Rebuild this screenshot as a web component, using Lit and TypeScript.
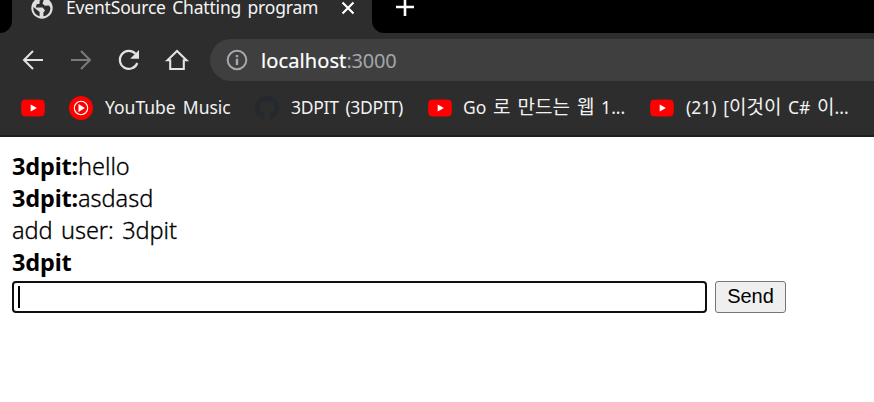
import { LitElement, html, svg, css } from "lit";
import { customElement, property } from "lit/decorators.js";

const glyphs: Record<string, { box: string; body: unknown }> = {
  back: { box: "0 0 24 24", body: svg`<path d="M22 12H3.5M12 3L3 12l9 9" fill="none" stroke="#e3e3e3" stroke-width="2"/>` },
  forward: { box: "0 0 24 24", body: svg`<path d="M2 12h18.500M12 3l9 9-9 9" fill="none" stroke="#7b7b7b" stroke-width="2"/>` },
  reload: { box: "0 0 24 24", body: svg`<path d="M20.300 15A9 9 0 1 1 18.500 5.800" fill="none" stroke="#e3e3e3" stroke-width="2.200"/><path d="M22 2v8.800h-8.800z" fill="#e3e3e3"/>` },
  home: { box: "0 0 24 24", body: svg`<path d="M2.500 12.200L12 3l9.500 9.200H18.800V21H5.200v-8.800z" fill="none" stroke="#e3e3e3" stroke-width="2.100"/>` },
  globe: { box: "0 0 22 22", body: svg`<circle cx="11" cy="11" r="10.700" fill="#dedede"/><path d="M11.500 2.200L8.600 3.600v3.200L5.600 7.300l-.8 3.200h6.800l2.500 3.100-1.700 2v3.700c4-.5 7-4 7-8.300l-1.300-2.500-4.300.3-2.300-2.300 1.200-3.200z" fill="#2d2d2d"/><path d="M2.400 10l6.200 5v4.300C4.400 18.200 2 14.400 2.400 10z" fill="#2d2d2d"/>` },
  info: { box: "0 0 22 22", body: svg`<circle cx="11" cy="11" r="9.300" fill="none" stroke="#a5a8ac" stroke-width="2"/><path d="M9.800 9.800h2.400V16H9.800zM9.800 6h2.400v2.300H9.800z" fill="#a5a8ac"/>` },
  close: { box: "0 0 14 14", body: svg`<path d="M1.500 1.500l11 11m0-11l-11 11" stroke="#fff" stroke-width="2.200"/>` },
  plus: { box: "0 0 18 18", body: svg`<path d="M9 0v18M0 9h18" stroke="#fff" stroke-width="2.600"/>` },
  youtube: { box: "0 0 24 24", body: svg`<path d="M3.200 3.800Q12 3.200 20.800 3.800Q23.200 4 23.600 6.500Q24.200 12 23.600 17.500Q23.200 20 20.800 20.200Q12 20.800 3.200 20.200Q.8 20 .4 17.500Q-.2 12 .4 6.500Q.8 4 3.200 3.800z" fill="#f00"/><path d="M9.700 8.400v7.200l6.200-3.600z" fill="#fff"/>` },
  music: { box: "0 0 24 24", body: svg`<circle cx="12" cy="12" r="12" fill="#f00"/><circle cx="12" cy="12" r="6.700" fill="none" stroke="#fff" stroke-width="1.100"/><path d="M9.500 8.100v7.800l6.400-3.900z" fill="#fff"/>` },
  github: { box: "0 0 16 16", body: svg`<path fill="#24292e" d="M8 0C3.580 0 0 3.580 0 8c0 3.540 2.290 6.530 5.470 7.590.4.070.550-.170.550-.380 0-.190-.010-.820-.010-1.490-2.010.370-2.530-.490-2.690-.940-.090-.230-.480-.940-.820-1.130-.280-.150-.680-.520-.010-.530.630-.010 1.080.580 1.230.820.720 1.210 1.870.870 2.330.660.070-.520.280-.870.510-1.070-1.780-.2-3.640-.890-3.640-3.950 0-.870.310-1.590.820-2.150-.080-.2-.360-1.020.080-2.120 0 0 .670-.210 2.200.820.640-.180 1.320-.270 2-.270s1.360.090 2 .270c1.530-1.040 2.200-.820 2.200-.820.440 1.100.160 1.920.080 2.120.510.560.820 1.270.820 2.150 0 3.070-1.870 3.750-3.650 3.950.290.250.540.730.540 1.480 0 1.070-.010 1.930-.010 2.200 0 .210.150.460.550.380A8.010 8.010 0 0 0 16 8c0-4.420-3.580-8-8-8z"/>` },
};

@customElement("ui-icon")
class UiIcon extends LitElement {
  @property() name = "";
  @property({ type: Number }) size = 24;
  static styles = css`
    :host { display: block; flex: none; line-height: 0; }
    svg { display: block; overflow: visible; }
  `;
  render() {
    const g = glyphs[this.name];
    return html`<svg width=${this.size} height=${this.size} viewBox=${g.box}>${g.body}</svg>`;
  }
}

@customElement("app-root")
class AppRoot extends LitElement {
  static styles = css`
    :host { display: block; width: 874px; height: 402px; overflow: hidden; background: #fff;
      font-family: "Noto Sans", "Noto Sans CJK KR", sans-serif; }
    .strip { display: flex; height: 33px; background: #2d2d2d; }
    .edge { width: 12px; background: #000; border-radius: 0 0 12px 0; }
    .tab { width: 360px; height: 33px; box-sizing: border-box; display: flex; padding-left: 19px; }
    .tab .fav { margin-top: -3px; }
    .title { width: 275px; margin-left: 13px; font-size: 17.5px; line-height: 14px; letter-spacing: -0.18px; word-spacing: 2px; color: #f4f4f4; white-space: pre; }
    .tab .close { margin-top: 1px; }
    .rest { flex: 1; background: #000; border-radius: 0 0 0 12px; padding-left: 24px; }
    .rest ui-icon { margin-top: -2px; }
    .toolbar { display: flex; height: 53px; padding-left: 21px; background: #2d2d2d; box-sizing: border-box; align-items: center; gap: 24px; }
    .address { flex: 1; height: 42px; margin-left: -3px; background: #3f3f3f; border-radius: 21px 0 0 21px; display: flex; align-items: center; padding-left: 16px; }
    .url { margin-left: 13px; margin-top: 2px; font-size: 20px; line-height: 28px; color: #fff; white-space: pre; }
    .host { letter-spacing: 0.1px; -webkit-text-stroke: 0.2px #fff; }
    .port { color: #a3a6aa; letter-spacing: -0.2px; }
    .marks { display: flex; height: 51px; box-sizing: border-box; border-bottom: 2px solid #1f1e20; background: #2d2d2d; padding: 0 0 5px 21px; align-items: center; }
    .mark { display: flex; align-items: center; gap: 12px; color: #f2f2f2; font-size: 17.5px; line-height: 26px; white-space: pre; flex: none; }
    .mark > span { margin-top: -2px; word-spacing: 2.5px; }
    .m2 span { letter-spacing: -0.28px; }
    .ko { font-size: 19px; line-height: 1; }
    .m3 > span { word-spacing: 2.1px; margin-left: -1px; }
    .m4 > span { word-spacing: 2.1px; }
    .m0 { width: 48px; } .m1 { width: 186px; } .m2 { width: 173px; } .m3 { width: 222px; }
    .page { padding: 13px 12px; color: #000; }
    .line { height: 32px; line-height: 32px; font-size: 23.5px; font-weight: 300; white-space: pre; }
    .line b { font-weight: 700; letter-spacing: -0.15px; }
    .line span { letter-spacing: -0.05px; -webkit-text-stroke: 0.3px #000; }
    .line .joined { word-spacing: 2.5px; letter-spacing: -0.07px; }
    .form { display: flex; gap: 8px; margin-top: 3px; }
    .field { width: 695px; height: 32px; box-sizing: border-box; border: 2px solid #101010; border-radius: 4px; padding: 3px 4px; }
    .caret { width: 2px; height: 22px; background: #000; }
    .send { width: 71px; height: 32px; box-sizing: border-box; border: 1px solid #767676; border-radius: 3px; background: #efefef; padding: 0 0 2px; font: 20px/28px "Liberation Sans", Arial, sans-serif; color: #000; }
  `;
  render() {
    return html`
      <div class="strip">
        <div class="edge"></div>
        <div class="tab">
          <ui-icon class="fav" name="globe" size="22"></ui-icon>
          <div class="title">EventSource Chatting program</div>
          <ui-icon class="close" name="close" size="14"></ui-icon>
        </div>
        <div class="rest"><ui-icon name="plus" size="18"></ui-icon></div>
      </div>
      <div class="toolbar">
        <ui-icon name="back"></ui-icon><ui-icon name="forward"></ui-icon>
        <ui-icon name="reload"></ui-icon><ui-icon name="home"></ui-icon>
        <div class="address">
          <ui-icon name="info" size="22"></ui-icon>
          <div class="url"><span class="host">localhost</span><span class="port">:3000</span></div>
        </div>
      </div>
      <div class="marks">
        <div class="mark m0"><ui-icon name="youtube"></ui-icon></div>
        <div class="mark m1"><ui-icon name="music"></ui-icon><span>YouTube Music</span></div>
        <div class="mark m2"><ui-icon name="github"></ui-icon><span>3DPIT (3DPIT)</span></div>
        <div class="mark m3"><ui-icon name="youtube"></ui-icon><span>Go <span class="ko">로 만드는 웹</span> 1...</span></div>
        <div class="mark m4"><ui-icon name="youtube"></ui-icon><span>(21) [<span class="ko">이것이</span> C# <span class="ko">이</span>...</span></div>
      </div>
      <div class="page">
        <div class="line"><b>3dpit:</b><span>hello</span></div>
        <div class="line"><b>3dpit:</b><span>asdasd</span></div>
        <div class="line"><span class="joined">add user: 3dpit</span></div>
        <div class="line"><b>3dpit</b></div>
        <div class="form"><div class="field"><div class="caret"></div></div><button class="send">Send</button></div>
      </div>
    `;
  }
}
